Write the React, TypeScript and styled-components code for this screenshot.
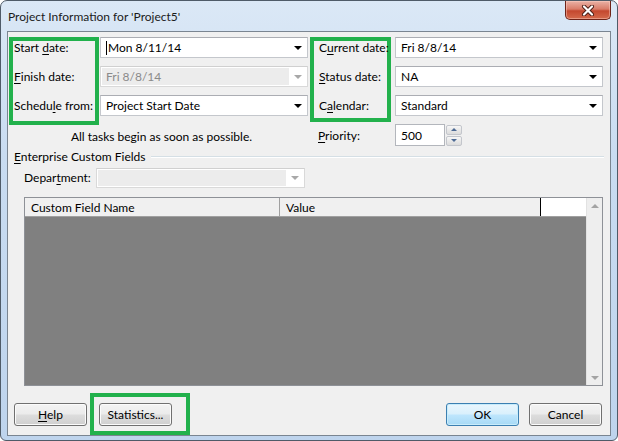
import React from 'react';
import styled, { createGlobalStyle, css } from 'styled-components';

const GREEN = '#22b14c';

const GlobalStyle = createGlobalStyle`
  html, body {
    margin: 0;
    padding: 0;
    background: #ffffff;
  }
  body {
    font-family: Lato, "Liberation Sans", Arial, sans-serif;
    font-size: 12px;
    color: #000000;
  }
  * {
    box-sizing: border-box;
  }
`;

const Window = styled.div`
  width: 618px;
  height: 441px;
  border: 1px solid #4f5b68;
  border-radius: 7px 7px 6px 6px;
  background: linear-gradient(180deg, #dbe8f6 0%, #c9dcf1 35%, #bed4ed 100%);
  display: flex;
  flex-direction: column;
  padding: 0 6px 4px;
  overflow: hidden;
`;

const TitleBar = styled.div`
  height: 30px;
  display: flex;
  align-items: flex-start;
  justify-content: space-between;
  flex-shrink: 0;
`;

const Title = styled.div`
  height: 30px;
  line-height: 31px;
  padding-left: 1px;
  color: #1b1b1b;
`;

const CloseButton = styled.div`
  width: 46px;
  height: 19px;
  border: 1px solid #6e2419;
  border-top: none;
  border-radius: 0 0 5px 5px;
  background: linear-gradient(180deg, #eab2a6 0%, #d97c69 45%, #c4482f 55%, #d46a4c 100%);
  box-shadow: inset 0 0 0 1px rgba(255, 210, 200, 0.45);
  display: flex;
  align-items: center;
  justify-content: center;
`;

const Client = styled.div`
  flex: 1;
  border: 1px solid #7a8591;
  background: #f0f0f0;
  padding: 5px 6px 0 1px;
  display: flex;
  flex-direction: column;
`;

const TopGrid = styled.div`
  display: grid;
  grid-template-columns: 299px 293px;
  column-gap: 2px;
`;

const Section = styled.div`
  display: flex;
  flex-direction: column;
`;

const FieldBlock = styled.div<{ $gap: number }>`
  display: flex;
  align-items: flex-start;
  gap: ${(p) => p.$gap}px;
`;

const LabelGroup = styled.div<{ $width: number; $padLeft: number; $padBottom: number }>`
  width: ${(p) => p.$width}px;
  border: 4px solid ${GREEN};
  padding: 0 0 ${(p) => p.$padBottom}px ${(p) => p.$padLeft}px;
  display: flex;
  flex-direction: column;
  gap: 16px;
`;

const FieldLabel = styled.div`
  height: 13px;
  line-height: 13px;
  white-space: nowrap;
`;

const Key = styled.span`
  text-decoration: underline;
  text-underline-offset: 2px;
`;

const ComboColumn = styled.div`
  width: 208px;
  display: flex;
  flex-direction: column;
  gap: 8px;
`;

const Combo = styled.div<{ $disabled?: boolean; $width?: number; $height?: number }>`
  width: ${(p) => (p.$width ? `${p.$width}px` : '100%')};
  height: ${(p) => p.$height ?? 21}px;
  border: 1px solid ${(p) => (p.$disabled ? '#d9d9d9' : '#c4c7cc')};
  border-top-color: ${(p) => (p.$disabled ? '#d0d0d0' : '#abadb3')};
  background: #ffffff;
  display: flex;
  align-items: stretch;
`;

const ComboText = styled.div<{ $disabled?: boolean }>`
  flex: 1;
  display: flex;
  align-items: center;
  padding-left: 5px;
  white-space: nowrap;
  ${(p) =>
    p.$disabled &&
    css`
      margin: 1px 0 1px 1px;
      padding-left: 4px;
      background: #ececec;
      color: #8a8a8a;
    `}
`;

const Caret = styled.span`
  display: inline-block;
  width: 1px;
  height: 14px;
  background: #000;
  margin-right: 1px;
`;

const ArrowBox = styled.div`
  width: 18px;
  display: flex;
  align-items: center;
  justify-content: center;
`;

const Triangle = styled.span<{ $color: string; $up?: boolean; $size?: number }>`
  width: 0;
  height: 0;
  border-left: ${(p) => p.$size ?? 4}px solid transparent;
  border-right: ${(p) => p.$size ?? 4}px solid transparent;
  ${(p) =>
    p.$up
      ? css`
          border-bottom: ${p.$size ?? 4}px solid ${p.$color};
        `
      : css`
          border-top: ${p.$size ?? 4}px solid ${p.$color};
        `}
`;

const Note = styled.div`
  margin-top: 5px;
  padding-left: 6px;
  text-align: center;
  height: 13px;
  line-height: 13px;
`;

const PriorityRow = styled.div`
  margin-top: 2px;
  display: flex;
  align-items: center;
  padding-left: 8px;
`;

const PriorityLabel = styled.div`
  width: 77px;
`;

const SpinInput = styled.div`
  width: 50px;
  height: 22px;
  border: 1px solid #b3b6bc;
  background: #ffffff;
  display: flex;
  align-items: center;
  padding-left: 5px;
`;

const SpinButtons = styled.div`
  display: flex;
  flex-direction: column;
  gap: 1px;
  margin-left: 1px;
`;

const SpinButton = styled.div`
  width: 16px;
  height: 10px;
  border: 1px solid #c3c6cc;
  border-radius: 2px;
  background: linear-gradient(180deg, #f7f7f7 0%, #e8e8e8 50%, #dcdcdc 100%);
  display: flex;
  align-items: center;
  justify-content: center;
`;

const GroupHeader = styled.div`
  margin-top: 4px;
  height: 13px;
  display: flex;
  align-items: center;
  gap: 6px;
  padding-left: 5px;
`;

const GroupLine = styled.div`
  flex: 1;
  height: 2px;
  border-top: 1px solid #d5dfe5;
  border-bottom: 1px solid #ffffff;
`;

const DeptRow = styled.div`
  margin-top: 5px;
  padding-left: 15px;
  display: flex;
  align-items: flex-start;
`;

const DeptLabel = styled.div`
  width: 72px;
  padding-top: 2px;
`;

const Table = styled.div`
  margin: 9px 0 0 15px;
  width: 579px;
  height: 189px;
  border: 1px solid #8e9197;
  display: flex;
`;

const TableMain = styled.div`
  flex: 1;
  display: flex;
  flex-direction: column;
`;

const HeaderRow = styled.div`
  height: 19px;
  display: flex;
  background: #ffffff;
  border-bottom: 1px solid #a0a0a0;
`;

const HeaderCell = styled.div<{ $width: number; $dark?: boolean }>`
  width: ${(p) => p.$width}px;
  background: #f0f0f0;
  border-right: 1px solid ${(p) => (p.$dark ? '#000000' : '#a0a0a0')};
  display: flex;
  align-items: center;
  padding-left: 6px;
  white-space: nowrap;
`;

const TableBody = styled.div`
  flex: 1;
  background: #808080;
`;

const ScrollBar = styled.div`
  width: 16px;
  background: #eeeeee;
  border-left: 1px solid #e2e2e2;
  display: flex;
  flex-direction: column;
  justify-content: space-between;
  align-items: center;
  padding: 6px 0 5px;
`;

const ButtonRow = styled.div`
  margin-top: 7px;
  display: flex;
  align-items: flex-start;
  padding-left: 5px;
`;

const Button = styled.div<{ $default?: boolean; $mt?: number; $ml?: number }>`
  width: 73px;
  height: 23px;
  margin-top: ${(p) => p.$mt ?? 0}px;
  margin-left: ${(p) => p.$ml ?? 0}px;
  border: 1px solid #707070;
  border-radius: 3px;
  background: linear-gradient(180deg, #f3f3f3 0%, #ebebeb 48%, #dddddd 52%, #cfcfcf 100%);
  box-shadow: inset 0 0 0 1px #fbfbfb;
  display: flex;
  align-items: center;
  justify-content: center;
  ${(p) =>
    p.$default &&
    css`
      border-color: #3c7fb1;
      background: linear-gradient(180deg, #eaf6fd 0%, #d9f0fc 48%, #bee6fd 52%, #a7d9f5 100%);
      box-shadow: inset 0 0 0 1px #c8ecfb;
    `}
`;

const HighlightBox = styled.div`
  margin-left: 3px;
  border: 4px solid ${GREEN};
  padding: 6px 14px 5px 5px;
`;

const CloseGlyph = () => (
  <svg width="14" height="11" viewBox="0 0 14 11">
    <path d="M3 1.5 L11 9.5 M11 1.5 L3 9.5" stroke="#4a1c14" strokeWidth="4" strokeLinecap="round" />
    <path d="M3 1.5 L11 9.5 M11 1.5 L3 9.5" stroke="#ffffff" strokeWidth="2.2" strokeLinecap="round" />
  </svg>
);

type ComboBoxProps = {
  value?: string;
  disabled?: boolean;
  caret?: boolean;
  width?: number;
  height?: number;
};

const ComboBox = ({ value, disabled, caret, width, height }: ComboBoxProps) => (
  <Combo $disabled={disabled} $width={width} $height={height}>
    <ComboText $disabled={disabled}>
      {caret && <Caret />}
      {value ? value : null}
    </ComboText>
    <ArrowBox>
      <Triangle $color={disabled ? '#a8a8a8' : '#000000'} $size={4} />
    </ArrowBox>
  </Combo>
);

export default function App() {
  return (
    <>
      <GlobalStyle />
      <Window>
        <TitleBar>
          <Title>Project Information for 'Project5'</Title>
          <CloseButton>
            <CloseGlyph />
          </CloseButton>
        </TitleBar>
        <Client>
          <TopGrid>
            <Section>
              <FieldBlock $gap={1}>
                <LabelGroup $width={90} $padLeft={1} $padBottom={9}>
                  <FieldLabel>
                    Start <Key>d</Key>ate:
                  </FieldLabel>
                  <FieldLabel>
                    <Key>F</Key>inish date:
                  </FieldLabel>
                  <FieldLabel>
                    Schedu<Key>l</Key>e from:
                  </FieldLabel>
                </LabelGroup>
                <ComboColumn>
                  <ComboBox value="Mon 8/11/14" caret />
                  <ComboBox value="Fri 8/8/14" disabled />
                  <ComboBox value="Project Start Date" />
                </ComboColumn>
              </FieldBlock>
              <Note>All tasks begin as soon as possible.</Note>
            </Section>
            <Section>
              <FieldBlock $gap={4}>
                <LabelGroup $width={81} $padLeft={5} $padBottom={6}>
                  <FieldLabel>
                    C<Key>u</Key>rrent date:
                  </FieldLabel>
                  <FieldLabel>
                    <Key>S</Key>tatus date:
                  </FieldLabel>
                  <FieldLabel>
                    C<Key>a</Key>lendar:
                  </FieldLabel>
                </LabelGroup>
                <ComboColumn>
                  <ComboBox value="Fri 8/8/14" />
                  <ComboBox value="NA" />
                  <ComboBox value="Standard" />
                </ComboColumn>
              </FieldBlock>
              <PriorityRow>
                <PriorityLabel>
                  <Key>P</Key>riority:
                </PriorityLabel>
                <SpinInput>500</SpinInput>
                <SpinButtons>
                  <SpinButton>
                    <Triangle $color="#4d6a94" $up $size={3} />
                  </SpinButton>
                  <SpinButton>
                    <Triangle $color="#4d6a94" $size={3} />
                  </SpinButton>
                </SpinButtons>
              </PriorityRow>
            </Section>
          </TopGrid>

          <GroupHeader>
            <span>
              <Key>E</Key>nterprise Custom Fields
            </span>
            <GroupLine />
          </GroupHeader>

          <DeptRow>
            <DeptLabel>
              Depar<Key>t</Key>ment:
            </DeptLabel>
            <ComboBox disabled width={209} height={20} />
          </DeptRow>

          <Table>
            <TableMain>
              <HeaderRow>
                <HeaderCell $width={255}>Custom Field Name</HeaderCell>
                <HeaderCell $width={261} $dark>
                  Value
                </HeaderCell>
              </HeaderRow>
              <TableBody />
            </TableMain>
            <ScrollBar>
              <Triangle $color="#a3a3a3" $up $size={4} />
              <Triangle $color="#a3a3a3" $size={4} />
            </ScrollBar>
          </Table>

          <ButtonRow>
            <Button $mt={10}>
              <span>
                <Key>H</Key>elp
              </span>
            </Button>
            <HighlightBox>
              <Button>
                <span>
                  Stat<Key>i</Key>stics...
                </span>
              </Button>
            </HighlightBox>
            <Button $default $mt={10} $ml={256}>
              OK
            </Button>
            <Button $mt={10} $ml={10}>
              Cancel
            </Button>
          </ButtonRow>
        </Client>
      </Window>
    </>
  );
}
